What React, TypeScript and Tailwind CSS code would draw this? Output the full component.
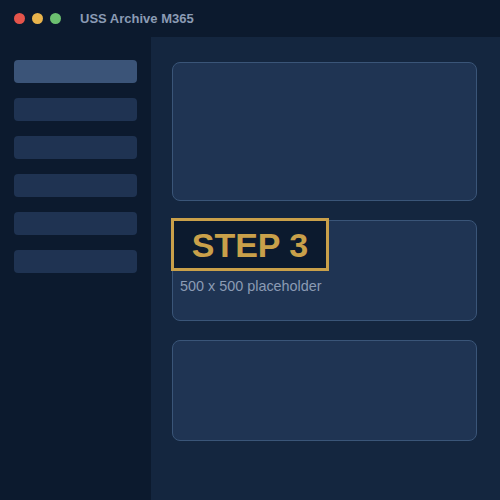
import React from "react";

export default function App() {
  const items = [0, 1, 2, 3, 4, 5];
  return (
    <div className="w-[500px] h-[500px] flex flex-col bg-[#0c1a2e] overflow-hidden" style={{ fontFamily: '"Liberation Sans", Arial, sans-serif' }}>
      <div className="h-[37px] shrink-0 flex items-center pl-[14px]">
        <div className="flex gap-[7px]">
          <span className="w-[11px] h-[11px] rounded-full bg-[#e5544b]" />
          <span className="w-[11px] h-[11px] rounded-full bg-[#e9b44c]" />
          <span className="w-[11px] h-[11px] rounded-full bg-[#6cc070]" />
        </div>
        <div className="ml-[19px] text-[13px] font-bold text-[#8b9bb4]">USS Archive M365</div>
      </div>
      <div className="flex flex-1">
        <div className="w-[151px] shrink-0 pt-[23px] pl-[14px] flex flex-col gap-[15px]">
          {items.map((i) => (
            <div key={i} className={`w-[123px] h-[23px] rounded-[4px] ${i === 0 ? "bg-[#3b5478]" : "bg-[#1f3352]"}`} />
          ))}
        </div>
        <div className="flex-1 bg-[#14263f] pt-[25px] pl-[21px] flex flex-col gap-[19px]">
          <div className="w-[305px] h-[139px] rounded-[8px] border border-[#3a5578] bg-[#1f3453]" />
          <div className="relative w-[305px] h-[101px] rounded-[8px] border border-[#3a5578] bg-[#1f3453] pt-[55px] px-[7px]">
            <div className="absolute left-[-2px] top-[-3px] w-[158px] h-[53px] border-[3px] border-[#c9a04a] bg-[#0c1a2e] flex items-center justify-center">
              <span className="text-[34px] font-bold text-[#c9a04a] leading-none">STEP 3</span>
            </div>
            <div className="text-[14.4px] leading-[20px] text-[#8b9bb4]">500 x 500 placeholder</div>
          </div>
          <div className="w-[305px] h-[101px] rounded-[8px] border border-[#3a5578] bg-[#1f3453]" />
        </div>
      </div>
    </div>
  );
}
